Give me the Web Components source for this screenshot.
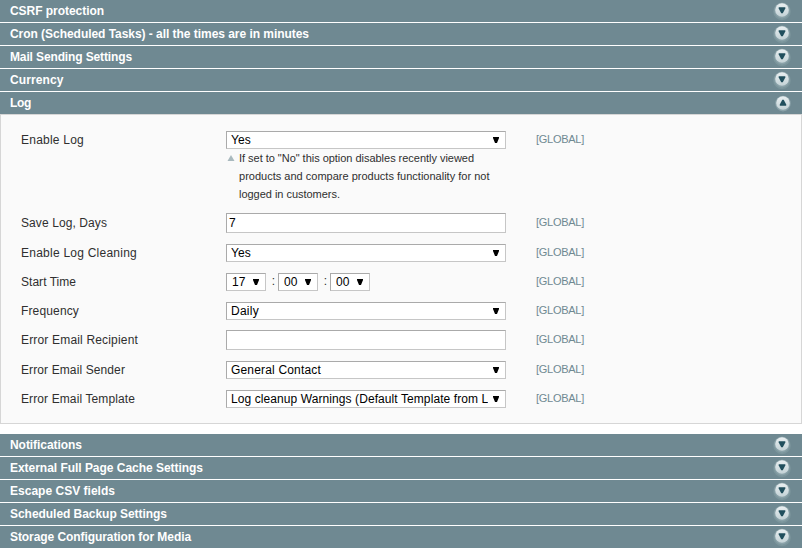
<!DOCTYPE html>
<html lang="en">
<head>
<meta charset="utf-8">
<title>System Configuration</title>
<style>
html, body { margin: 0; background: #fff; }
body { font: 12px/18px "Liberation Sans", Arial, sans-serif; color: #2f2f2f; }
</style>
</head>
<body>
<config-page></config-page>
<script>
function define(name, html, setup) {
  const t = document.createElement('template');
  t.innerHTML = html;
  customElements.define(name, class extends HTMLElement {
    constructor() {
      super();
      this.attachShadow({ mode: 'open' }).append(t.content.cloneNode(true));
    }
    connectedCallback() { if (setup) setup(this, this.shadowRoot); }
  });
}

// Spreads the slotted text over the width given in the "w" attribute.
define('fit-text', `<style>
:host { display: inline-block; white-space: nowrap; }
</style><span><slot></slot></span>`, (el, root) => {
  const w = +el.getAttribute('w');
  if (!w) return;
  const span = root.querySelector('span');
  const n = el.textContent.length;
  span.style.letterSpacing = ((w - span.getBoundingClientRect().width) / n) + 'px';
});

define('toggle-icon', `<style>
:host { display: block; width: 18px; height: 19px; }
:host([open]) { transform: translate(1px, 1px); }
svg { display: block; }
.up { display: none; }
:host([open]) .up { display: block; }
:host([open]) .down, :host([open]) .low { display: none; }
</style>
<svg width="18" height="20" viewBox="0 0 18 20">
<defs><linearGradient id="g" x1="0" y1="0" x2="0" y2="1"><stop offset="0" stop-color="#e9eff1"/><stop offset="1" stop-color="#c3d2d6"/></linearGradient></defs>
<circle class="low" cx="9" cy="10.4" r="8.8" fill="#7b959c"/>
<circle cx="9" cy="9.6" r="7.8" fill="#8aa2a9"/>
<circle cx="9" cy="9" r="6.8" fill="url(#g)"/>
<path class="down" d="M5.7 6.3h6.6v1.2L9.8 12.3H8.2L5.7 7.5z" fill="#214f5d"/>
<path class="up" d="M5.8 11.7h6.4v-1.2L9.7 5.7H8.3L5.8 10.5z" fill="#214f5d"/>
</svg>`);

define('section-bar', `<style>
:host { display: flex; justify-content: space-between; box-sizing: border-box; height: 22px; margin-bottom: 1px; padding: 0 11px 0 10px; background: #6f8992; color: #fff; font-weight: bold; line-height: 22px; }
:host([last]) { margin-bottom: 0; }
toggle-icon { margin-top: 1px; }
</style><slot></slot><toggle-icon></toggle-icon>`, (el, root) => {
  root.querySelector('toggle-icon').toggleAttribute('open', el.hasAttribute('open'));
});

define('select-box', `<style>
:host { display: flex; justify-content: space-between; align-items: center; box-sizing: border-box; height: 18px; border: 1px solid; border-color: #aaa #c6c6c6 #c6c6c6 #aaa; background: #fff; color: #000; padding: 0 6px 0 4px; line-height: 18px; }
.v { flex: 1; overflow: hidden; white-space: nowrap; height: 16px; margin-right: 5px; line-height: 17px; }
svg { flex: none; display: block; }
</style><span class="v"><slot></slot></span>
<svg width="6" height="6" viewBox="0 0 6 6"><path d="M0 0h6v1L4 6H2L0 1z" fill="#000"/></svg>`);

define('text-box', `<style>
:host { display: block; box-sizing: border-box; height: 20px; border: 1px solid; border-color: #aaa #c6c6c6 #c6c6c6 #aaa; background: #fff; color: #000; padding: 0 2px; line-height: 19px; }
</style><slot></slot>`);

define('time-picker', `<style>
:host { display: flex; }
select-box { box-sizing: border-box; width: 40px; padding-left: 5px; }
i { font-style: normal; width: 12px; text-align: right; box-sizing: border-box; padding-right: 3px; line-height: 17px; }
</style><select-box>17</select-box><i>:</i><select-box>00</select-box><i>:</i><select-box>00</select-box>`);

define('field-note', `<style>
:host { display: block; position: relative; padding-left: 13px; font-size: 11px; line-height: 18px; }
svg { position: absolute; left: 1px; top: 6px; }
::slotted(div) { height: 18px; }
</style><svg width="8" height="6" viewBox="0 0 8 6"><path d="M4 0L7.5 6H.5z" fill="#a9b9be"/></svg><slot></slot>`);

define('config-row', `<style>
:host { display: grid; grid-template-columns: 205px 280px 80px; margin-bottom: 11px; line-height: 18px; }
:host([tall]) { line-height: 20px; }
:host([tight]) { margin-bottom: 10px; }
.scope { margin-left: 30px; margin-top: -1px; font-size: 11px; color: #6f8992; white-space: nowrap; }
</style><div><slot name="label"></slot></div><div><slot></slot></div><div class="scope"><fit-text w="48">[GLOBAL]</fit-text></div>`);

define('config-panel', `<style>
:host { display: block; box-sizing: border-box; height: 310px; margin: -1px 0 10px; padding: 16px 20px 0; border: 1px solid #d6d6d6; background: #fafafa; }
</style><slot></slot>`);

define('config-page', `<style>
:host { display: block; width: 802px; height: 548px; overflow: hidden; }
</style>
<section-bar><fit-text w="94">CSRF protection</fit-text></section-bar>
<section-bar><fit-text w="299">Cron (Scheduled Tasks) - all the times are in minutes</fit-text></section-bar>
<section-bar><fit-text w="122">Mail Sending Settings</fit-text></section-bar>
<section-bar><fit-text w="53.5">Currency</fit-text></section-bar>
<section-bar open><fit-text w="21">Log</fit-text></section-bar>
<config-panel>
<config-row tight><fit-text slot="label" w="63">Enable Log</fit-text><select-box><fit-text w="20">Yes</fit-text></select-box>
<field-note><div><fit-text w="235">If set to "No" this option disables recently viewed</fit-text></div><div><fit-text w="250.5">products and compare products functionality for not</fit-text></div><div><fit-text w="101">logged in customers.</fit-text></div></field-note></config-row>
<config-row tall><fit-text slot="label" w="86">Save Log, Days</fit-text><text-box>7</text-box></config-row>
<config-row><fit-text slot="label" w="116">Enable Log Cleaning</fit-text><select-box><fit-text w="20">Yes</fit-text></select-box></config-row>
<config-row><fit-text slot="label" w="55">Start Time</fit-text><time-picker></time-picker></config-row>
<config-row tight><fit-text slot="label" w="58">Frequency</fit-text><select-box><fit-text w="28">Daily</fit-text></select-box></config-row>
<config-row tall><fit-text slot="label" w="117">Error Email Recipient</fit-text><text-box></text-box></config-row>
<config-row><fit-text slot="label" w="104">Error Email Sender</fit-text><select-box><fit-text w="90">General Contact</fit-text></select-box></config-row>
<config-row><fit-text slot="label" w="114">Error Email Template</fit-text><select-box><fit-text w="264">Log cleanup Warnings (Default Template from Lo</fit-text></select-box></config-row>
</config-panel>
<section-bar><fit-text w="72">Notifications</fit-text></section-bar>
<section-bar><fit-text w="193">External Full Page Cache Settings</fit-text></section-bar>
<section-bar><fit-text w="105">Escape CSV fields</fit-text></section-bar>
<section-bar><fit-text w="157">Scheduled Backup Settings</fit-text></section-bar>
<section-bar last><fit-text w="181">Storage Configuration for Media</fit-text></section-bar>`);
</script>
</body>
</html>
